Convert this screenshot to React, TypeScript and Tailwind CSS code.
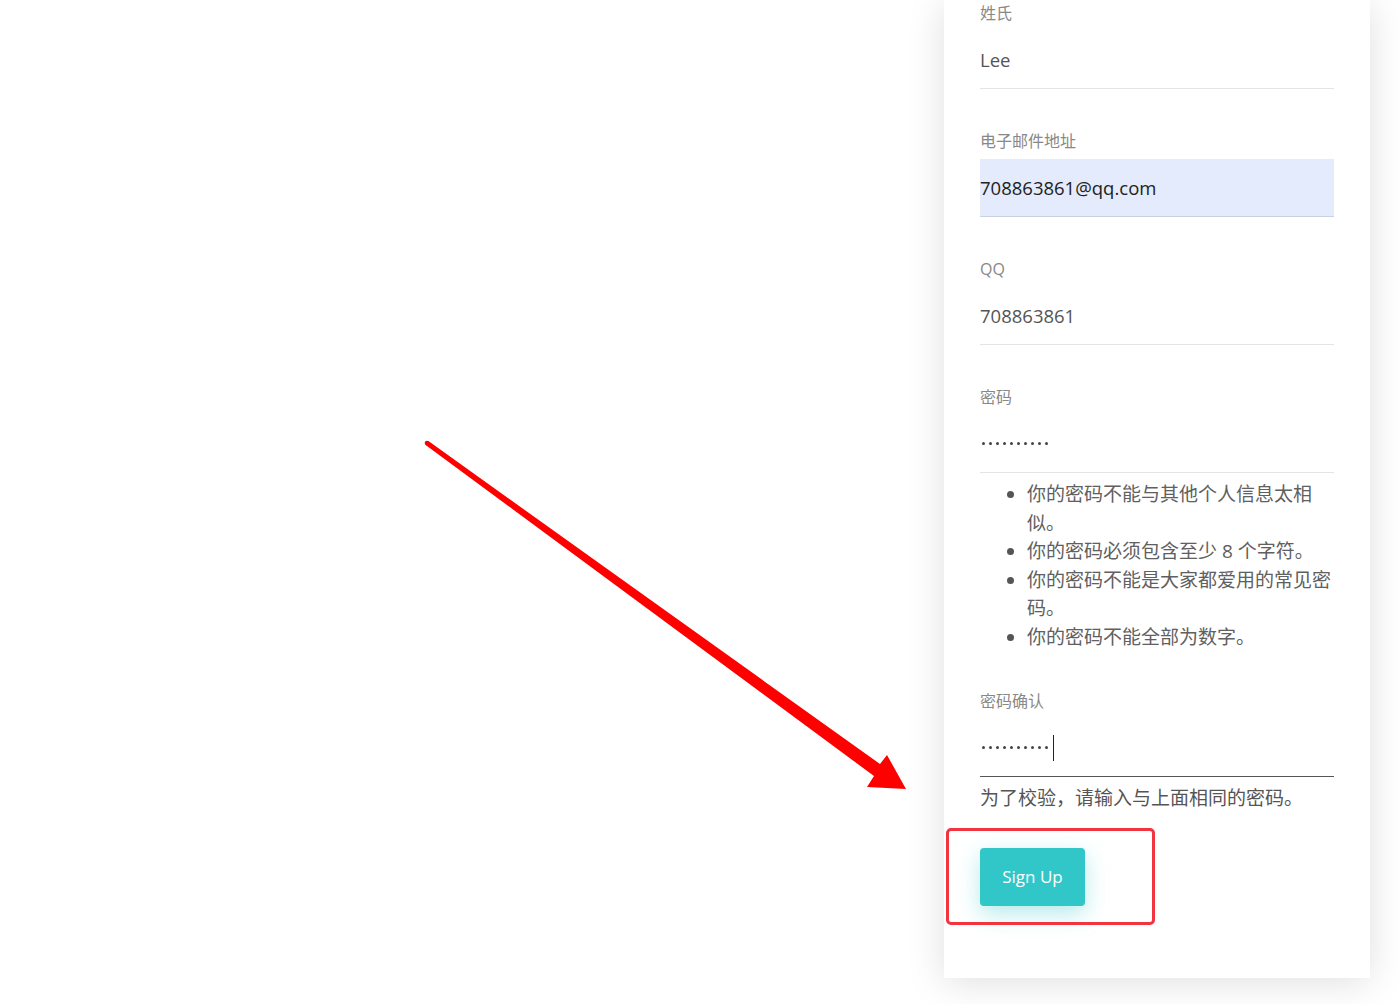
import React from 'react';

const font = { fontFamily: '"Open Sans", "Noto Sans CJK SC", sans-serif' };

type FieldProps = {
  label: string;
  value: string;
  tone?: 'plain' | 'autofill' | 'focus';
  dots?: boolean;
  caret?: boolean;
};

const Field: React.FC<FieldProps> = ({ label, value, tone = 'plain', dots, caret }) => {
  const box =
    tone === 'autofill'
      ? 'bg-[#e3ebfc] border-[#c9d2e0] text-[#222]'
      : tone === 'focus'
        ? 'border-[#555] text-[#444]'
        : 'border-[#e4e4e4] text-[#555]';
  return (
    <div>
      <div className="h-6 text-[16px] leading-6 text-[#888]">{label}</div>
      <div className={`mt-[6px] flex h-[58px] items-center border-b ${box}`}>
        {dots ? (
          <span className="flex items-center gap-[3.6px] pl-[2px]">
            {Array.from({ length: 10 }).map((_, i) => (
              <span key={i} className="h-[3.4px] w-[3.4px] rounded-full bg-[#444]" />
            ))}
            {caret && <span className="ml-[1px] h-[26px] w-[1.5px] bg-[#222]" />}
          </span>
        ) : (
          <span className="text-[18.5px] leading-6">{value}</span>
        )}
      </div>
    </div>
  );
};

const rules = [
  '你的密码不能与其他个人信息太相似。',
  '你的密码必须包含至少 8 个字符。',
  '你的密码不能是大家都爱用的常见密码。',
  '你的密码不能全部为数字。',
];

const App: React.FC = () => {
  return (
    <div className="relative h-[1004px] w-full overflow-hidden bg-white" style={font}>
      <div className="flex justify-end pr-[30px]">
        <div className="w-[426px] bg-white px-9 pt-[1px] pb-[72px] shadow-[0_4px_36px_rgba(0,0,0,0.13)]">
          <div className="flex flex-col gap-10">
            <Field label="姓氏" value="Lee" />
            <Field label="电子邮件地址" value="708863861@qq.com" tone="autofill" />
            <Field label="QQ" value="708863861" />
            <Field label="密码" value="" dots />
          </div>

          <ul className="mt-[7px] list-disc pl-[47px] text-[19px] leading-[28.5px] text-[#606060] marker:text-[#555]">
            {rules.map((r) => (
              <li key={r}>{r}</li>
            ))}
          </ul>

          <div className="mt-[38px]">
            <Field label="密码确认" value="" tone="focus" dots caret />
          </div>

          <p className="mt-[9px] text-[19px] leading-6 text-[#555]">为了校验，请输入与上面相同的密码。</p>

          <div className="relative mt-[38px]">
            <button className="h-[58px] w-[105px] rounded-[4px] bg-[#31c6c7] text-[17px] text-white shadow-[0_8px_22px_rgba(49,198,199,0.35)]">
              Sign Up
            </button>
            <div className="pointer-events-none absolute left-[-34px] top-[-20px] h-[97px] w-[209px] rounded-[5px] border-[3px] border-[#f23340]" />
          </div>
        </div>
      </div>

      <svg
        className="pointer-events-none absolute left-0 top-0"
        width="1400"
        height="1004"
        viewBox="0 0 1400 1004"
      >
        <circle cx="427" cy="443" r="2.3" fill="#ff0000" />
        <polygon
          points="428.4,441.1 880,764 887,755 906,789 867,787 874,776 425.6,444.9"
          fill="#ff0000"
        />
      </svg>
    </div>
  );
};

export default App;
